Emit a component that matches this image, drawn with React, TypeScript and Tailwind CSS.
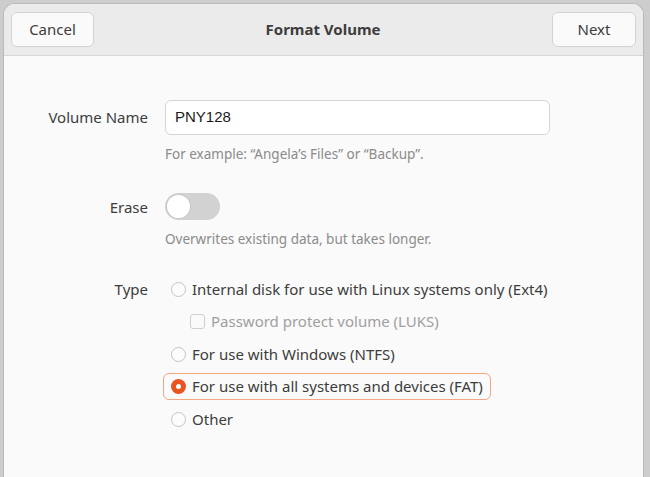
import { useState } from "react";

const font = { fontFamily: '"Noto Sans", "Open Sans", sans-serif' };

const Radio = ({ checked }: { checked?: boolean }) =>
  checked ? (
    <span className="flex h-[15px] w-[15px] shrink-0 items-center justify-center rounded-full bg-[#e95420]">
      <span className="h-[5px] w-[5px] rounded-full bg-white" />
    </span>
  ) : (
    <span className="h-[15px] w-[15px] shrink-0 rounded-full border border-[#c4c4c4] bg-[#fcfcfc]" />
  );

const options = [
  "Internal disk for use with Linux systems only (Ext4)",
  "For use with Windows (NTFS)",
  "For use with all systems and devices (FAT)",
  "Other",
];

export default function App() {
  const [selected, setSelected] = useState(2);

  return (
    <div className="h-[477px] w-[650px] bg-[#cdcdcd] pt-[3px] pl-[3px] pr-[6px]" style={font}>
      <div className="flex h-[474px] flex-col overflow-hidden rounded-t-[12px] border border-b-0 border-[#b9b9b9] bg-[#fafafa] text-[#3d3d3d]">
        <div className="flex h-[52px] shrink-0 items-center justify-between border-b border-[#d6d6d6] bg-[#ebebeb] px-[7px]">
          <button className="h-[35px] w-[83px] rounded-[6px] border border-[#d3d3d3] bg-[#fafafa] text-[15px] text-[#3d3d3d]">
            Cancel
          </button>
          <div className="text-[15px] font-bold text-[#3d3d3d]">Format Volume</div>
          <button className="h-[35px] w-[84px] rounded-[6px] border border-[#d3d3d3] bg-[#fafafa] text-[15px] text-[#3d3d3d]">
            Next
          </button>
        </div>

        <div className="grid grid-cols-[144px_1fr] gap-x-[17px] pt-[44px] text-[15px]">
          <div className="flex h-[35px] items-center justify-end">Volume Name</div>
          <div>
            <div className="flex h-[35px] w-[385px] items-center rounded-[6px] border border-[#d4d4d4] bg-white px-[9px] text-[15px] text-[#1a1a1a]" style={{ fontFamily: '"Liberation Sans", Arial, sans-serif' }}>
              PNY128
            </div>
            <div className="mt-[9px] text-[13.5px] text-[#8b8b8b]">
              For example: “Angela’s Files” or “Backup”.
            </div>
          </div>

          <div className="mt-[29px] flex h-[27px] items-center justify-end">Erase</div>
          <div className="mt-[29px]">
            <div className="flex h-[27px] w-[55px] items-center rounded-full bg-[#d2d2d2] p-[2px]">
              <span className="h-[23px] w-[23px] rounded-full bg-white shadow-[0_0_0_1px_#c8c8c8]" />
            </div>
            <div className="mt-[9px] text-[13.5px] text-[#8b8b8b]">
              Overwrites existing data, but takes longer.
            </div>
          </div>

          <div className="mt-[26px] flex h-[27px] items-center justify-end">Type</div>
          <div className="mt-[26px] flex flex-col">
            {options.map((label, i) => (
              <div key={label} className="flex flex-col">
                <button
                  onClick={() => setSelected(i)}
                  className={`-ml-[2px] flex h-[27px] w-fit items-center gap-[6px] rounded-[6px] border-[1.5px] pl-[7px] pr-[7px] text-left ${
                    selected === i ? "border-[#f3a783]" : "border-transparent"
                  } ${i > 0 ? "mt-[5.5px]" : ""}`}
                >
                  <Radio checked={selected === i} />
                  <span>{label}</span>
                </button>
                {i === 0 && (
                  <div className="mt-[5.5px] flex h-[27px] items-center gap-[6px] pl-[25px] text-[#a0a0a0]">
                    <span className="h-[15px] w-[15px] shrink-0 rounded-[3px] border border-[#cfcfcf] bg-[#fafafa]" />
                    <span>Password protect volume (LUKS)</span>
                  </div>
                )}
              </div>
            ))}
          </div>
        </div>
      </div>
    </div>
  );
}
